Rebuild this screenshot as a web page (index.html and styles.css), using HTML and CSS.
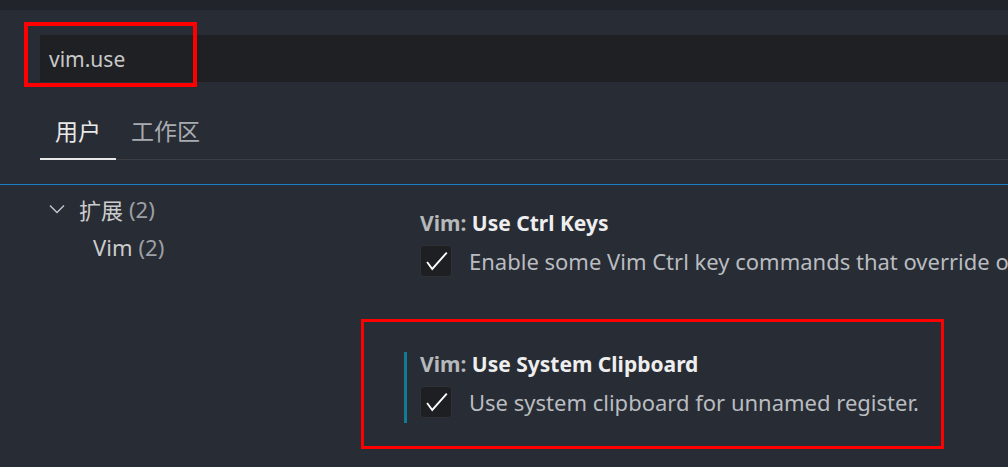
FILE: index.html
```html
<!DOCTYPE html>
<html lang="zh">
<head>
<meta charset="utf-8">
<title>Settings</title>
<link rel="stylesheet" href="styles.css">
</head>
<body>
<div class="page">
  <div class="topbar"></div>
  <div class="header">
    <div class="search"><span class="query">vim.use</span></div>
    <div class="tabs">
      <div class="tab active">用户</div>
      <div class="tab">工作区</div>
      <div class="tab-rest"></div>
    </div>
  </div>
  <div class="divider"></div>
  <div class="main">
    <div class="tree">
      <div class="tree-row group">
        <svg class="chev" width="16" height="10" viewBox="0 0 16 10"><path d="M1 1.5 L8 8.5 L15 1.5" fill="none" stroke="#c5c8cc" stroke-width="1.4"/></svg>
        <span class="label">扩展</span><span class="count">(2)</span>
      </div>
      <div class="tree-row child">
        <span class="label">Vim</span><span class="count">(2)</span>
      </div>
    </div>
    <div class="settings">
      <div class="setting">
        <div class="title"><span class="cat">Vim: </span><span class="name">Use Ctrl Keys</span></div>
        <div class="value">
          <span class="check"><svg width="32" height="32" viewBox="0 0 32 32"><path d="M6.5 17 L12 24.5 L27.5 7" fill="none" stroke="#ffffff" stroke-width="2"/></svg></span>
          <span class="desc">Enable some Vim Ctrl key commands that override otherwise common operations, like Ctrl+C.</span>
        </div>
      </div>
      <div class="setting focused">
        <div class="title"><span class="cat">Vim: </span><span class="name">Use System Clipboard</span></div>
        <div class="value">
          <span class="check"><svg width="32" height="32" viewBox="0 0 32 32"><path d="M6.5 17 L12 24.5 L27.5 7" fill="none" stroke="#ffffff" stroke-width="2"/></svg></span>
          <span class="desc">Use system clipboard for unnamed register.</span>
        </div>
      </div>
    </div>
  </div>
  <div class="mark mark-search"></div>
  <div class="mark mark-setting"></div>
</div>
</body>
</html>
```

FILE: styles.css
```css
* { box-sizing: border-box; }
html, body {
  margin: 0;
  padding: 0;
  background: #282c34;
  overflow: hidden;
}
body {
  font-family: "Noto Sans", "Noto Sans CJK SC", sans-serif;
  color: #cccccc;
  width: 1008px;
  height: 467px;
}
.page {
  position: relative;
  width: 1008px;
  height: 467px;
  overflow: hidden;
}
.topbar {
  height: 10px;
  background: #21252b;
}
.header {
  padding: 25px 0 0 40px;
}
.search {
  height: 47px;
  background: #1f2023;
  display: flex;
  align-items: center;
  padding-left: 9px;
}
.query {
  font-size: 21px;
  color: #c8c8c8;
}
.tabs {
  display: flex;
  margin-top: 22px;
  align-items: flex-end;
}
.tab {
  font-family: "Noto Sans CJK SC", sans-serif;
  font-size: 23px;
  line-height: 28px;
  padding: 12px 15px 15px;
  color: #a8abaf;
  border-bottom: 1px solid #3b3e44;
}
.tab.active {
  color: #e8e8e8;
  border-bottom: 2px solid #e8e8e8;
  padding-bottom: 14px;
}
.tab-rest {
  flex: 1;
  border-bottom: 1px solid #3b3e44;
}
.divider {
  margin-top: 24px;
  height: 1px;
  background: #1c7ec6;
}
.main {
  display: flex;
}
.tree {
  flex: none;
  width: 404px;
  padding: 5px 0 0 48px;
  font-size: 22px;
}
.tree-row {
  display: flex;
  align-items: center;
  height: 38px;
  gap: 6px;
}
.tree-row .label {
  color: #cccccc;
}
.tree-row .count {
  color: #9da0a4;
}
.chev {
  margin: 0 8px 0 1px;
}
.tree-row.child {
  padding-left: 45px;
}
.settings {
  flex: 1;
  min-width: 0;
  overflow: hidden;
  padding-top: 26px;
}
.setting {
  border-left: 3px solid transparent;
  padding: 0 0 5px 13px;
  margin-bottom: 70px;
}
.setting.focused {
  border-left-color: #117a95;
}
.title {
  font-size: 21px;
  line-height: 24px;
  font-weight: 700;
  white-space: nowrap;
}
.cat { color: #b6b8bb; }
.name { color: #eeeeee; }
.value {
  display: flex;
  align-items: center;
  margin-top: 10px;
  white-space: nowrap;
}
.check {
  width: 32px;
  height: 32px;
  flex: none;
  background: #1e1f22;
  border: 1px solid #2f3136;
  border-radius: 4px;
  display: flex;
  align-items: center;
  justify-content: center;
}
.check svg { display: block; }
.desc {
  margin-left: 17px;
  font-size: 22px;
  color: #b9bcc0;
}
.mark {
  position: absolute;
  border: 3px solid #ff0000;
}
.mark-search {
  left: 24px;
  top: 22px;
  width: 173px;
  height: 65px;
  border-width: 4px;
}
.mark-setting {
  left: 361px;
  top: 319px;
  width: 583px;
  height: 130px;
}
```
